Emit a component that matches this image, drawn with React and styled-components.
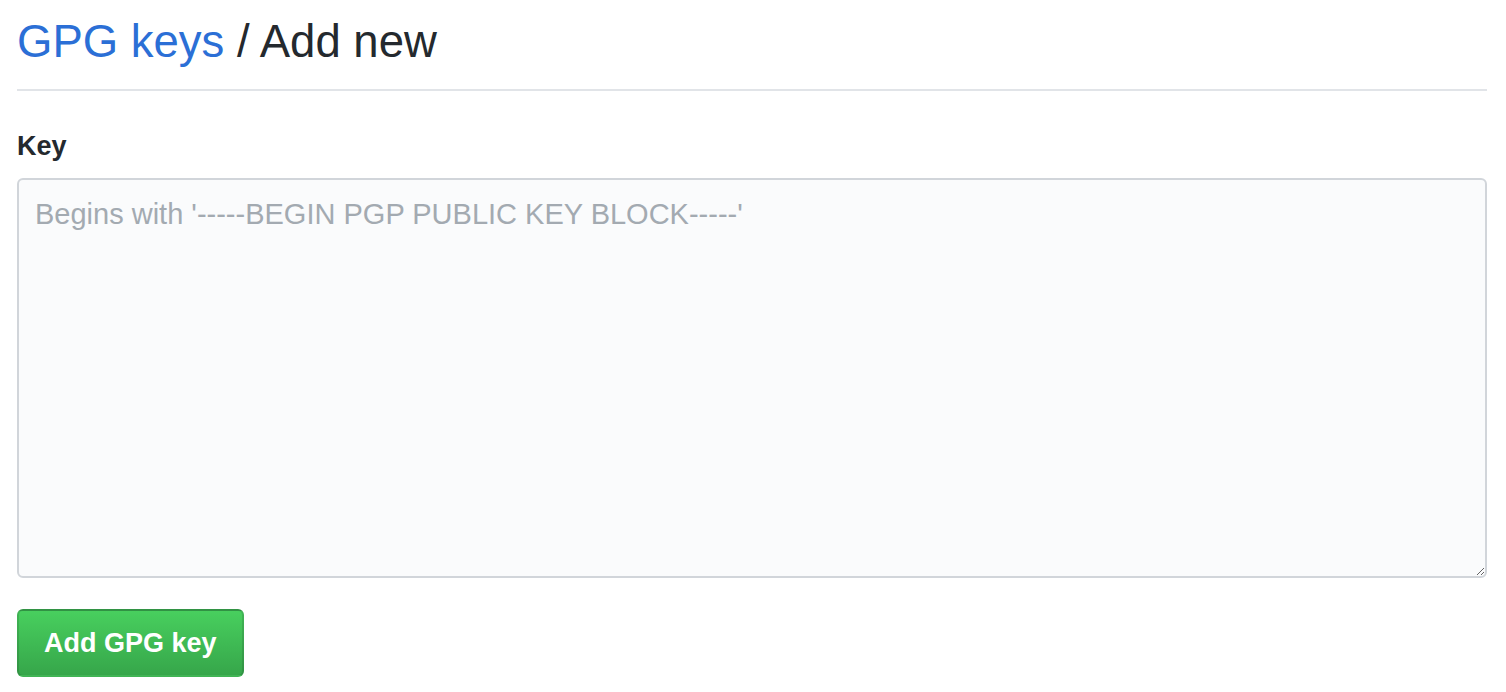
import React from 'react'
import styled, { createGlobalStyle } from 'styled-components';

// Estilos globais: zera margem do body e define a fonte base
const GlobalStyle = createGlobalStyle`
    body {
        margin: 0;
        background-color: #ffffff;
        font-family: "Liberation Sans", Arial, sans-serif;
        color: #24292e;
    }
`;

const Page = styled.div`
    padding: 0 19px 0 17px;
`;

const Subhead = styled.div`
    padding-top: 12px;
    padding-bottom: 17px;
    margin-bottom: 38px;
    border-bottom: 2px solid #e1e4e8;
`;

const Heading = styled.h2`
    margin: 0;
    font-size: 45.5px;
    font-weight: 400;
    line-height: 60px;
    color: #24292e;
`;

const HeadingLink = styled.a`
    color: #2b6fd6;
    text-decoration: none;
`;

const Label = styled.label`
    display: block;
    font-size: 27px;
    font-weight: 700;
    line-height: 34px;
    margin-bottom: 15px;
    color: #24292e;
`;

const KeyArea = styled.textarea`
    display: block;
    box-sizing: border-box;
    width: 100%;
    height: 400px;
    margin: 0;
    padding: 16px 16px;
    border: 2px solid #d1d5da;
    border-radius: 6px;
    background-color: #fafbfc;
    font-family: "Liberation Sans", Arial, sans-serif;
    font-size: 29px;
    line-height: 36px;
    color: #24292e;
    resize: vertical;
    outline: none;

    &::placeholder {
        color: #a3aab1;
    }
`;

const SubmitButton = styled.button`
    display: block;
    margin-top: 31px;
    height: 68px;
    padding: 0 25px;
    border: 2px solid rgba(27, 31, 35, 0.15);
    border-radius: 6px;
    background-image: linear-gradient(-180deg, #48cf5e 0%, #36a64a 100%);
    color: #ffffff;
    font-family: "Liberation Sans", Arial, sans-serif;
    font-size: 27px;
    font-weight: 700;
    cursor: pointer;
`;

function App() {
    return (
        <Page>
            <GlobalStyle />
            <Subhead>
                <Heading>
                    <HeadingLink href='/'>GPG keys</HeadingLink> / Add new
                </Heading>
            </Subhead>
            <form onSubmit={(e) => e.preventDefault()}>
                <Label htmlFor='gpg-key'>Key</Label>
                <KeyArea
                    id='gpg-key'
                    placeholder="Begins with '-----BEGIN PGP PUBLIC KEY BLOCK-----'"
                />
                <SubmitButton type='submit'>Add GPG key</SubmitButton>
            </form>
        </Page>
    );
}

export default App;
